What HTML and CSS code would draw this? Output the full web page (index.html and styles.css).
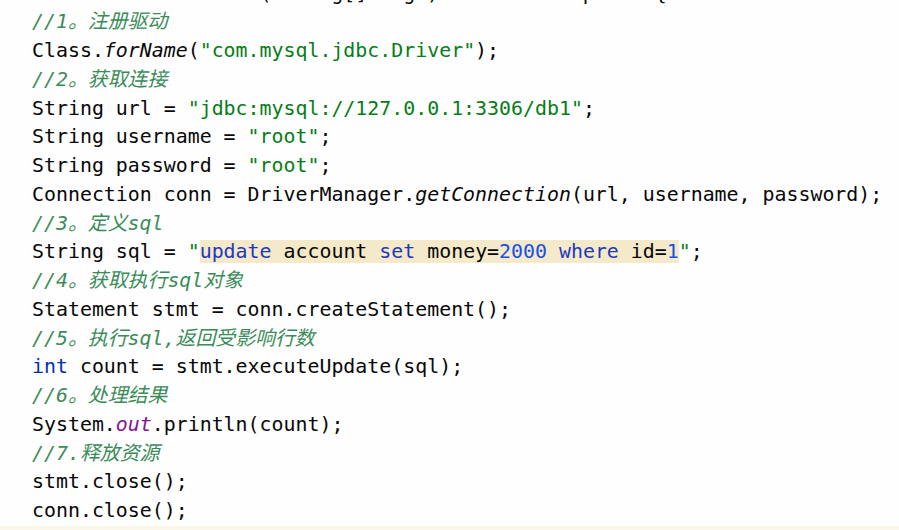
FILE: index.html
```html
<!DOCTYPE html>
<html lang="zh-CN">
<head>
    <meta charset="UTF-8">
    <meta name="viewport" content="width=device-width, initial-scale=1.0">
    <title>JDBC Demo</title>
    <link rel="stylesheet" href="styles.css">
</head>
<body>
    <div class="editor">
        <div class="line sig"><span class="kw">public static void</span> main(String[] args) <span class="kw">throws</span> Exception {</div>
        <div class="line"><span class="cm">//1。注册驱动</span></div>
        <div class="line">Class.<span class="it">forName</span>(<span class="str">"com.mysql.jdbc.Driver"</span>);</div>
        <div class="line"><span class="cm">//2。获取连接</span></div>
        <div class="line">String url = <span class="str">"jdbc:mysql://127.0.0.1:3306/db1"</span>;</div>
        <div class="line">String username = <span class="str">"root"</span>;</div>
        <div class="line">String password = <span class="str">"root"</span>;</div>
        <div class="line">Connection conn = DriverManager.<span class="it">getConnection</span>(url, username, password);</div>
        <div class="line"><span class="cm">//3。定义sql</span></div>
        <div class="line">String sql = <span class="str">"</span><span class="inj"><span class="sqlkw">update</span> account <span class="sqlkw">set</span> money=<span class="num">2000</span> <span class="sqlkw">where</span> id=<span class="num">1</span></span><span class="str">"</span>;</div>
        <div class="line"><span class="cm">//4。获取执行sql对象</span></div>
        <div class="line">Statement stmt = conn.createStatement();</div>
        <div class="line"><span class="cm">//5。执行sql,返回受影响行数</span></div>
        <div class="line"><span class="kw">int</span> count = stmt.executeUpdate(sql);</div>
        <div class="line"><span class="cm">//6。处理结果</span></div>
        <div class="line">System.<span class="field">out</span>.println(count);</div>
        <div class="line"><span class="cm">//7.释放资源</span></div>
        <div class="line">stmt.close();</div>
        <div class="line">conn.close();</div>
        <div class="line current"></div>
    </div>
</body>
</html>
```

FILE: styles.css
```css
body {
    margin: 0;
    background-color: #fefefe;
    overflow: hidden;
}

.editor {
    margin-top: -20.5px;
    font-family: 'DejaVu Sans Mono', 'Noto Sans CJK SC', monospace;
    font-size: 19.9px;
    line-height: 28.75px;
    color: #080808;
}

.line {
    height: 28.75px;
    padding-left: 32px;
    white-space: pre;
}

.sig {
    text-indent: -48px;
}

.current {
    background-color: #faf8e8;
}

.kw {
    color: #0033b3;
}

.cm {
    color: #3a8c58;
    font-style: italic;
}

.str {
    color: #067d17;
}

.it {
    font-style: italic;
}

.field {
    color: #871094;
    font-style: italic;
}

.inj {
    background-color: #f4e9c9;
}

.sqlkw {
    color: #1f38c0;
}

.num {
    color: #1750eb;
}
```
